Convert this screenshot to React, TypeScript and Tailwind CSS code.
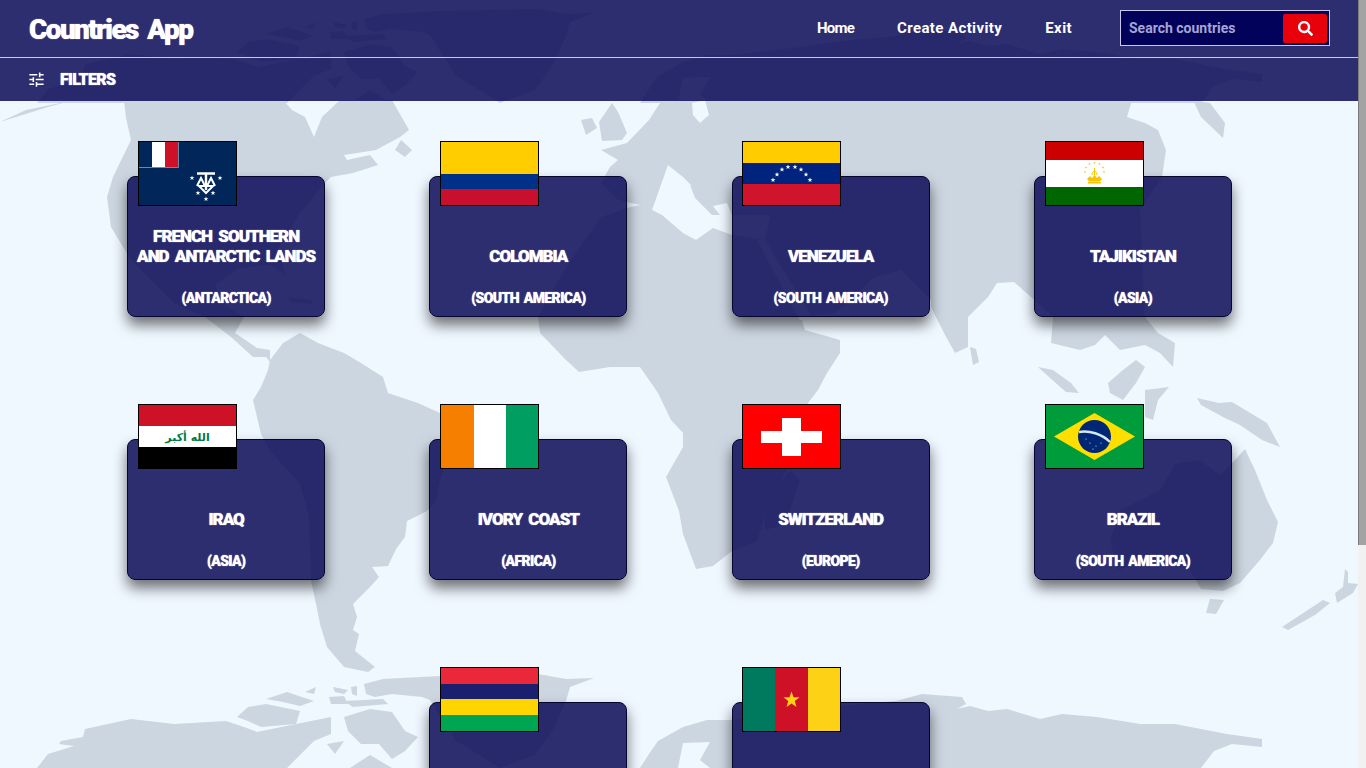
import React from "react";
import { FaSearch } from "react-icons/fa";
import { MdTune } from "react-icons/md";

// star polygon points, used by the flags
const star = (cx: number, cy: number, r: number) => {
  const pts: string[] = [];
  for (let i = 0; i < 10; i++) {
    const rad = i % 2 === 0 ? r : r * 0.4;
    const a = (Math.PI / 5) * i - Math.PI / 2;
    pts.push(`${(cx + rad * Math.cos(a)).toFixed(2)},${(cy + rad * Math.sin(a)).toFixed(2)}`);
  }
  return pts.join(" ");
};

// continents, in page coordinates
const land = [
  // north america
  "124,100 126,118 131,140 113,177 107,197 111,227 131,260 174,303 205,317 231,337 253,357 266,357 270,362 270,350 257,348 235,333 244,317 225,305 215,285 240,268 270,265 285,275 279,247 300,213 325,183 331,177 353,173 378,165 370,155 347,160 344,155 376,150 400,137 409,130 392,100 340,100 322,117 314,137 305,117 292,110 283,100",
  "401,140 412,150 405,157 395,150",
  "287,297 313,300 312,304 290,302",
  "0,122 26,110 70,101 48,107",
  // south america
  "270,360 283,343 300,333 318,343 344,353 361,363 383,377 388,393 418,403 440,413 448,425 450,450 440,481 436,501 427,511 407,521 405,537 396,549 388,566 372,567 379,577 370,587 353,604 357,617 353,630 359,634 355,651 375,667 368,672 344,667 327,647 320,624 316,604 311,581 309,517 300,484 270,451 261,434 253,400 261,387 268,370",
  // eurasia and africa
  "545,100 662,100 649,120 627,143 601,150 618,160 610,167 601,183 618,200 640,205 627,208 601,217 566,267 538,317 540,333 566,360 579,372 610,367 640,367 658,393 671,420 683,433 683,447 666,477 679,511 683,534 696,569 713,566 732,551 757,541 770,501 788,467 792,433 805,407 818,390 827,373 840,353 840,340 805,330 801,317 835,313 875,277 901,270 931,300 931,307 944,333 955,353 968,347 968,317 988,297 997,283 1014,282 1031,297 1053,317 1051,343 1080,350 1095,345 1105,335 1120,350 1145,345 1160,353 1173,367 1175,343 1158,333 1145,317 1140,210 1162,177 1166,150 1158,130 1145,123 1127,117 1132,100",
  "581,120 592,118 597,128 586,135",
  "599,122 612,103 618,112 627,133 622,140 602,141",
  "970,347 976,349 979,362 973,365",
  "1193,100 1210,103 1225,123 1223,138 1201,117",
  // islands and oceania
  "1038,367 1053,370 1071,383 1079,393 1066,392 1049,377",
  "1136,360 1145,367 1136,383 1123,400 1110,393 1108,383 1123,370",
  "1145,390 1169,387 1158,400 1153,420 1145,417",
  "1197,398 1219,403 1232,402 1267,423 1280,447 1262,440 1240,425 1223,417 1201,405",
  "1245,449 1255,470 1267,500 1278,522 1273,543 1260,560 1240,583 1223,591 1201,589 1190,570 1150,560 1118,570 1110,541 1120,510 1160,490 1175,464 1200,460 1220,475 1235,460",
  "1210,599 1224,600 1216,614 1206,613",
  "1282,627 1323,600 1330,603 1315,615 1288,630",
  "1345,569 1348,572 1348,583 1358,584 1353,593 1337,603 1335,593 1343,587",
  "790,470 800,480 785,525 765,530 765,500",
];

// seas cut out of the big landmass
const seas = [
  "652,210 668,165 683,177 696,190 709,207 727,203 732,215 770,215 765,240 732,235 713,228 696,240 683,233 662,215",
  "757,240 765,240 812,317 800,320",
  "692,103 705,100 709,115 700,123 693,115",
];

// the tile repeats, so these show at the bottom of the page and again under the header
const arctic = [
  "37,768 48,754 74,746 59,744 61,741 83,737 85,729 131,719 174,724 226,721 244,727 257,732 296,724 331,717 331,734 314,741 287,768",
  "237,717 248,707 266,704 300,711 296,724 261,727 248,721",
  "266,699 287,692 314,701 300,706 283,702",
  "305,692 316,687 314,694",
  "333,687 348,690 344,694 335,692",
  "351,687 357,686 357,696 352,694",
  "329,697 344,696 348,704 331,704",
  "344,701 383,699 388,704 353,707",
  "344,717 370,709 392,712 405,731 418,737 405,751 392,759 379,744 361,744 348,731",
  "327,744 344,741 335,754",
  "350,768 370,755 392,768",
  "364,684 383,679 440,676 538,674 566,679 594,678 570,687 566,701 553,730 535,755 500,768 455,740 430,700 422,697 392,694 375,697 366,694",
  "640,768 649,754 658,741 683,727 707,720 732,720 800,712 850,705 896,701 922,694 962,697 966,704 957,709 970,706 988,711 1007,709 1040,719 1062,714 1097,717 1140,724 1175,724 1227,734 1262,739 1262,747 1232,744 1214,751 1201,768 710,768 700,760 710,742 683,743 678,768",
];

const WorldMap = () => (
  <svg className="absolute inset-0 h-full w-full" viewBox="0 0 1358 768" preserveAspectRatio="none">
    <g fill="#ccd6e1">
      {land.map((p, i) => (
        <polygon key={i} points={p} />
      ))}
    </g>
    <g fill="#eff7ff">
      {seas.map((p, i) => (
        <polygon key={i} points={p} />
      ))}
    </g>
    <polygon fill="#ccd6e1" points="690,185 700,190 720,215 712,215 695,198" />
    <g fill="#ccd6e1">
      {arctic.map((p, i) => (
        <polygon key={i} points={p} />
      ))}
    </g>
    <g fill="#ccd6e1" transform="translate(0,-665)">
      {arctic.map((p, i) => (
        <polygon key={i} points={p} />
      ))}
    </g>
  </svg>
);

const Stripes = ({ rows }: { rows: [string, number][] }) => {
  let y = 0;
  return (
    <>
      {rows.map(([c, h]) => {
        const top = y;
        y += h;
        return <rect key={c} x="0" y={top} width="97" height={h} fill={c} />;
      })}
    </>
  );
};

const flags: Record<string, React.ReactNode> = {
  atf: (
    <>
      <rect width="97" height="63" fill="#00265a" />
      <rect x="13" width="13" height="25" fill="#ffffff" />
      <rect x="26" width="13" height="25" fill="#ce1126" />
      <path d="M0 25.5H39.5V0" fill="none" stroke="#6f87a8" strokeWidth="1" />
      <path d="M58 31.5H76M67 31.5V48" stroke="#fff" strokeWidth="2.4" fill="none" />
      <path d="M58 44L62 36L66 44M68 44L72 36L76 44M60 44H74L67 51Z" stroke="#fff" strokeWidth="2" fill="none" />
      <g fill="#fff">
        <polygon points={star(53, 36, 2.6)} />
        <polygon points={star(81, 36, 2.6)} />
        <polygon points={star(59, 51, 2.6)} />
        <polygon points={star(74, 51, 2.6)} />
        <polygon points={star(67, 57, 2.6)} />
      </g>
    </>
  ),
  col: <Stripes rows={[["#ffcd00", 32], ["#003087", 15], ["#c8102e", 16]]} />,
  ven: (
    <>
      <Stripes rows={[["#ffcc00", 21], ["#00247d", 21], ["#cf142b", 21]]} />
      <g fill="#fff">
        {[[30, 38], [34, 32.5], [39, 27.5], [45, 25], [52, 25], [58, 27.5], [63, 32.5], [67, 38]].map(([x, y]) => (
          <polygon key={x} points={star(x, y, 2.6)} />
        ))}
      </g>
    </>
  ),
  tjk: (
    <>
      <Stripes rows={[["#cc0000", 18], ["#ffffff", 27], ["#006600", 18]]} />
      <g fill="#f8c300">
        {[[48.5, 21], [43.5, 22], [53.5, 22], [40, 25.5], [57, 25.5], [39, 30], [58, 30]].map(([x, y]) => (
          <polygon key={x} points={star(x, y, 1.3)} />
        ))}
        <path d="M41 37L44 34L46 36L48.5 33L51 36L53 34L56 37L54 39.5H43Z" />
        <rect x="42" y="40" width="13" height="1.5" />
      </g>
      <path d="M48.5 26V33M46 33C46 28 51 28 51 33" stroke="#f8c300" fill="none" strokeWidth="1" />
    </>
  ),
  irq: (
    <>
      <Stripes rows={[["#ce1126", 21], ["#ffffff", 21], ["#000000", 21]]} />
      <text x="48.5" y="36" textAnchor="middle" fontSize="11" fontWeight="700" fill="#007a3d" fontFamily="DejaVu Sans, sans-serif" direction="rtl">
        الله أكبر
      </text>
    </>
  ),
  civ: (
    <>
      <rect width="33" height="63" fill="#f77f00" />
      <rect x="33" width="32" height="63" fill="#ffffff" />
      <rect x="65" width="32" height="63" fill="#009e60" />
    </>
  ),
  che: (
    <>
      <rect width="97" height="63" fill="#ff0000" />
      <rect x="39" y="13" width="19" height="38" fill="#fff" />
      <rect x="18" y="26" width="61" height="12" fill="#fff" />
    </>
  ),
  bra: (
    <>
      <rect width="97" height="63" fill="#009b3a" />
      <polygon points="8,31.5 48.5,8 89,31.5 48.5,55" fill="#fedf00" />
      <circle cx="48.5" cy="31.5" r="16.5" fill="#002776" />
      <path d="M33 27C43 25 56 29 64 37" stroke="#d5e8ee" strokeWidth="2.4" fill="none" />
      <g fill="#dfe8f5">
        <circle cx="44" cy="38" r=".6" />
        <circle cx="50" cy="41" r=".6" />
        <circle cx="55" cy="38" r=".6" />
        <circle cx="40" cy="34" r=".6" />
        <circle cx="47" cy="44" r=".6" />
      </g>
    </>
  ),
  mus: <Stripes rows={[["#ea2839", 16], ["#1a206d", 15], ["#ffd500", 16], ["#00a551", 16]]} />,
  cmr: (
    <>
      <rect width="32" height="63" fill="#007a5e" />
      <rect x="32" width="33" height="63" fill="#ce1126" />
      <rect x="65" width="32" height="63" fill="#fcd116" />
      <polygon points={star(48.5, 32, 8.5)} fill="#fcd116" />
    </>
  ),
};

type Country = { flag: string; name: string[]; continent: string };

// the last row runs past the bottom of the window, so only its flags show
const countries: Country[] = [
  { flag: "atf", name: ["FRENCH SOUTHERN", "AND ANTARCTIC LANDS"], continent: "(ANTARCTICA)" },
  { flag: "col", name: ["COLOMBIA"], continent: "(SOUTH AMERICA)" },
  { flag: "ven", name: ["VENEZUELA"], continent: "(SOUTH AMERICA)" },
  { flag: "tjk", name: ["TAJIKISTAN"], continent: "(ASIA)" },
  { flag: "irq", name: ["IRAQ"], continent: "(ASIA)" },
  { flag: "civ", name: ["IVORY COAST"], continent: "(AFRICA)" },
  { flag: "che", name: ["SWITZERLAND"], continent: "(EUROPE)" },
  { flag: "bra", name: ["BRAZIL"], continent: "(SOUTH AMERICA)" },
  { flag: "mus", name: [], continent: "" },
  { flag: "cmr", name: [], continent: "" },
];

const Card = ({ c }: { c: Country }) => (
  <div
    className={`relative flex h-[141px] w-[198px] flex-col items-center justify-end rounded-lg border border-[#05052e] bg-[#0d0d58]/[0.86] pb-[8px] text-white shadow-[0_8px_14px_rgba(0,0,0,0.55)] ${
      c.flag === "mus" ? "col-start-2" : ""
    }`}
  >
    {/* Flag sits over the top of the card */}
    <svg className="absolute -top-[36px] left-[9.8px] h-[65px] w-[99px] border border-black" viewBox="0 0 97 63" preserveAspectRatio="none">
      {flags[c.flag]}
    </svg>
    <div className="text-center text-[17px] leading-[20px] font-black tracking-[-1px] [word-spacing:3px] [text-shadow:0_0_1px_#fff]">
      {c.name.map((line) => (
        <div key={line} className="whitespace-nowrap">
          {line}
        </div>
      ))}
    </div>
    <div className="mt-[22px] text-[14px] leading-[20px] font-black tracking-[-0.6px] [word-spacing:2px] [text-shadow:0_0_1px_#fff]">{c.continent}</div>
  </div>
);

export default function App() {
  return (
    <div className="flex h-screen overflow-hidden bg-[#eff7ff] font-['Roboto',sans-serif]">
      <main className="relative flex-1 overflow-hidden">
        <WorldMap />
        <div className="relative">
          {/* Top bar */}
          <header className="flex h-[58px] items-center border-b border-[#c8c8ee] bg-[#0d0d58]/[0.86] pr-[28px] pl-[29px] text-white">
            <h1 className="mt-[3px] text-[28px] leading-none font-black tracking-[-1.6px] [word-spacing:4px] [text-shadow:0_0_1px_#fff]">Countries App</h1>
            <nav className="ml-auto flex items-center gap-[43px] text-[15px] font-bold tracking-[0.4px]">
              <a className="tracking-[-0.8px]">Home</a>
              <a>Create Activity</a>
              <a>Exit</a>
            </nav>
            <div className="mb-[2px] ml-[48px] flex h-[36px] w-[210px] items-center border border-[#c8c8ee] bg-[#02025a] pr-[2px] pl-[8px]">
              <input
                className="w-full min-w-0 flex-1 bg-transparent pt-[2px] text-[14px] font-bold outline-none placeholder:text-[#a5a5d5]"
                placeholder="Search countries"
              />
              <button className="mt-[1px] flex h-[29px] w-[44px] shrink-0 items-center justify-center rounded-[2px] bg-[#e8000b] text-white">
                <FaSearch size={15} />
              </button>
            </div>
          </header>

          {/* Filters */}
          <div className="flex h-[43px] items-center gap-[14px] bg-[#0d0d58]/[0.86] pl-[27px] text-white">
            <MdTune size={19} />
            <span className="text-[16px] font-black tracking-[-0.7px] [text-shadow:0_0_1px_#fff]">FILTERS</span>
          </div>

          {/* Countries */}
          <div className="ml-[75px] grid w-[1209px] grid-cols-4 justify-items-center gap-y-[122px] pt-[75px]">
            {countries.map((c) => (
              <Card key={c.flag} c={c} />
            ))}
          </div>
        </div>
      </main>

      {/* Scrollbar of the page */}
      <aside className="flex w-[8px] flex-col bg-[#f1f1f1]">
        <div className="h-[545px] border-l border-[#7c7c7c] bg-[#a3a3a3]" />
      </aside>
    </div>
  );
}
